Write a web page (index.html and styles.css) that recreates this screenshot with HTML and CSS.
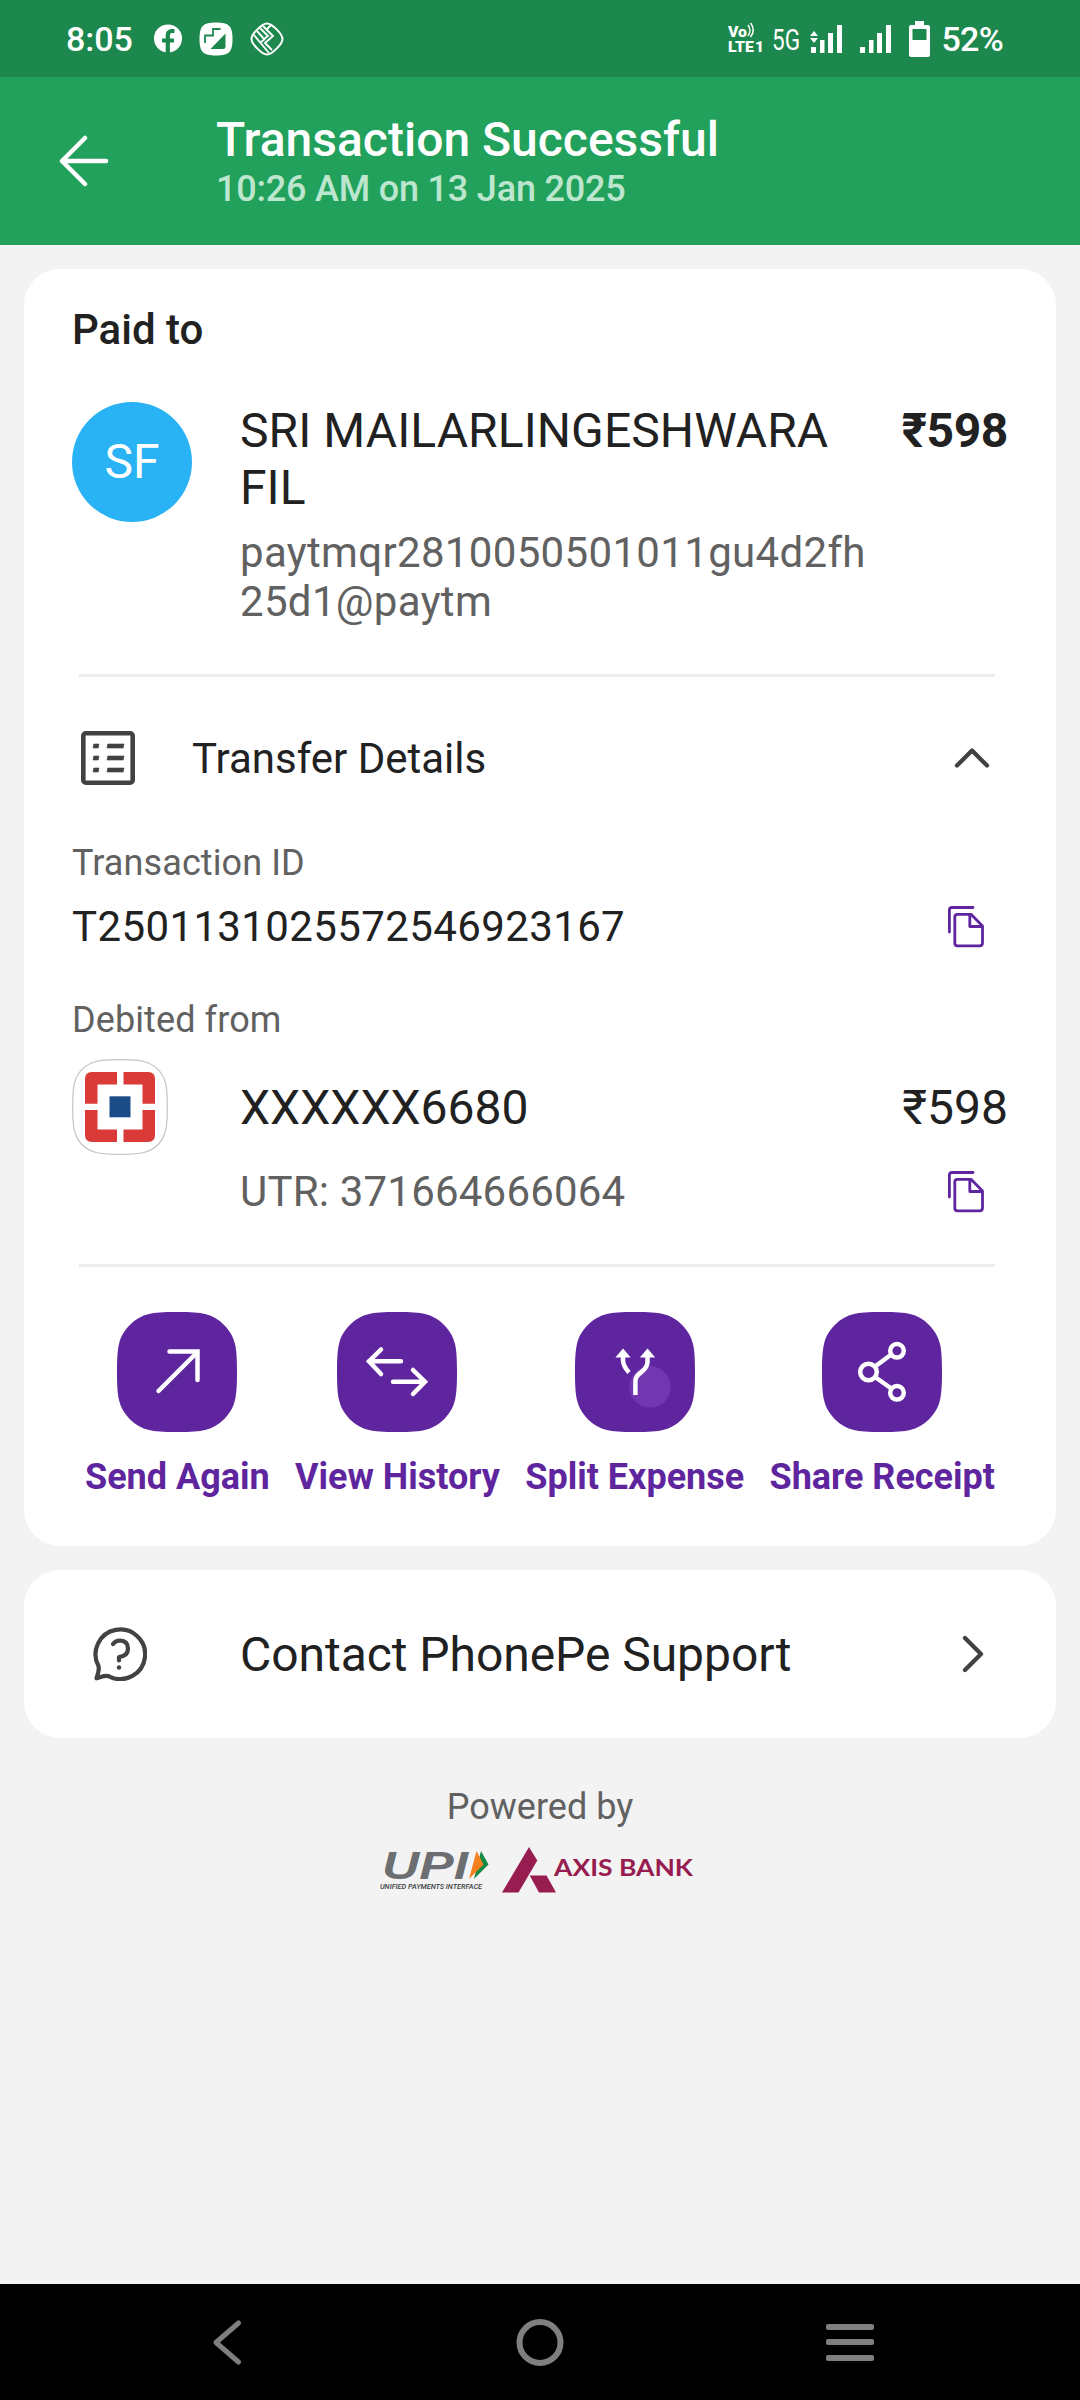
FILE: index.html
```html
<!DOCTYPE html>
<html lang="en">
<head>
    <meta charset="UTF-8">
    <meta name="viewport" content="width=device-width, initial-scale=1.0">
    <title>Transaction Successful</title>
    <link rel="stylesheet" href="styles.css">
</head>
<body>
    <div class="status-bar">
        <div class="status-left">
            <span class="time">8:05</span>
            <svg width="28" height="30" viewBox="0 0 28 30">
                <circle cx="14" cy="14.5" r="14" fill="#fff"/>
                <path d="M13.8 30V11.5Q13.8 7 18 7H20.5M8 16.5H20" fill="none" stroke="#1c884d" stroke-width="4.2"/>
            </svg>
            <svg width="34" height="34" viewBox="0 0 34 34">
                <path d="M17 .5C30 .5 33.5 4 33.5 17S30 33.5 17 33.5.5 30 .5 17 4 .5 17 .5Z" fill="#fff"/>
                <path d="M6 21V13.5H14V7H21.5" fill="none" stroke="#1c884d" stroke-width="1.8"/>
                <path d="M26.5 11.5V24.5Q26.5 27 24 27H11.5Z" fill="#1c884d"/>
            </svg>
            <svg width="34" height="34" viewBox="0 0 34 34" fill="none" stroke="#fff">
                <path d="M17 1.5C22 1.5 32.5 12 32.5 17S22 32.5 17 32.5 1.5 22 1.5 17 12 1.5 17 1.5Z" stroke-width="2"/>
                <path d="M4 13L19 31M7 9L14 17L18 14L10 6M13 4L23 14L15 21L22 28M17 7L21 3M11 20L15 17" stroke-width="1.9"/>
            </svg>
        </div>
        <div class="status-right">
            <svg class="volte" width="36" height="36" viewBox="0 0 36 36" fill="#fff">
                <text x="0" y="16" font-size="15" textLength="19" lengthAdjust="spacingAndGlyphs">Vo</text>
                <path d="M20 4Q24 9.5 20 15M22.5 2Q28 9 22.5 16" fill="none" stroke="#fff" stroke-width="1.5"/>
                <text x="0" y="31" font-size="15.5" textLength="26" lengthAdjust="spacingAndGlyphs">LTE</text>
                <text x="27" y="31" font-size="15.5">1</text>
            </svg>
            <svg class="net" width="28" height="38" viewBox="0 0 28 38" fill="#fff">
                <text x="0" y="29.5" font-size="30" textLength="28" lengthAdjust="spacingAndGlyphs">5G</text>
            </svg>
            <svg class="signal" width="32" height="30" viewBox="0 0 32 30" fill="#fff">
                <path d="M0 11L4 6L8 11ZM0 13L4 18L8 13ZM1 22H6V28H1ZM10 15H14.5V28H10ZM18 8H23V28H18ZM27 0H32V28H27Z"/>
            </svg>
            <svg class="signal" width="31" height="30" viewBox="0 0 31 30" fill="#fff">
                <path d="M0 22H5V28H0ZM9 15H13.5V28H9ZM17 8H22V28H17ZM26 0H31V28H26Z"/>
            </svg>
            <svg class="battery" width="21" height="36" viewBox="0 0 21 36">
                <path d="M6 0H15V4H19Q21 4 21 6V34Q21 36 19 36H2Q0 36 0 34V6Q0 4 2 4H6Z" fill="#fff"/>
                <path d="M3.5 8H17.5V19H3.5Z" fill="#1c884d"/>
            </svg>
            <span class="percent">52%</span>
        </div>
    </div>

    <header class="header">
        <svg class="back" width="50" height="52" viewBox="0 0 50 52">
            <path d="M26 3L3 26L26 49M3 26H47" fill="none" stroke="#fff" stroke-width="4.5" stroke-linecap="round" stroke-linejoin="round"/>
        </svg>
        <div>
            <h1>Transaction Successful</h1>
            <p>10:26 AM on 13 Jan 2025</p>
        </div>
    </header>

    <main class="content">
        <section class="card">
            <h2>Paid to</h2>
            <div class="payee">
                <div class="avatar">SF</div>
                <div class="payee-info">
                    <div class="name">SRI MAILARLINGESHWARA FIL</div>
                    <div class="vpa">paytmqr2810050501011gu4d2fh25d1@paytm</div>
                </div>
                <div class="amount bold">₹598</div>
            </div>

            <hr>

            <div class="row details-head">
                <svg width="54" height="54" viewBox="0 0 54 54" fill="none" stroke="#424242">
                    <rect x="2.3" y="2.3" width="49.4" height="49.4" rx="2.5" stroke-width="4.6"/>
                    <path d="M12 17L12.8 13H18L17.2 17ZM26 17L26.8 13H43L42.2 17ZM12 29L12.8 25H18L17.2 29ZM26 29L26.8 25H43L42.2 29ZM12 41L12.8 37H18L17.2 41ZM26 41L26.8 37H43L42.2 41Z" fill="#424242" stroke-width=".6" stroke-linejoin="round"/>
                </svg>
                <span class="details-title">Transfer Details</span>
                <svg class="chevron-up" width="36" height="22" viewBox="0 0 36 22">
                    <path d="M3 18.5L18 3.5L33 18.5" fill="none" stroke="#424242" stroke-width="4.3" stroke-linecap="round" stroke-linejoin="round"/>
                </svg>
            </div>

            <div class="label">Transaction ID</div>
            <div class="row txn">
                <span>T2501131025572546923167</span>
                <svg class="copy" width="36" height="42" viewBox="0 0 36 42">
                    <path d="M1.4 26V4Q1.4 1.5 4 1.5H25M9.5 8.3H23L34.5 20V37Q34.5 39.8 31.5 39.8H9.5Q6.8 39.8 6.8 37V11Q6.8 8.3 9.5 8.3ZM21.8 8.5V20.5H34"/>
                </svg>
            </div>

            <div class="label debited">Debited from</div>
            <div class="row bank">
                <svg width="96" height="96" viewBox="0 0 96 96">
                    <path d="M48 .7C60 .7 67 1.2 72 2.5C83 5.5 90.5 13 93.5 24C94.8 29 95.3 36 95.3 48S94.8 67 93.5 72C90.5 83 83 90.5 72 93.5C67 94.8 60 95.3 48 95.3S29 94.8 24 93.5C13 90.5 5.5 83 2.5 72C1.2 67 .7 60 .7 48S1.2 29 2.5 24C5.5 13 13 5.5 24 2.5C29 1.2 36 .7 48 .7Z" fill="#fff" stroke="#c4c4c4" stroke-width="1.2"/>
                    <path d="M45 13H20Q13 13 13 20V44.7H25.5V25.5H45ZM51.5 13H76Q83 13 83 20V44.7H70.5V25.5H51.5ZM45 83H20Q13 83 13 76V51H25.5V70.5H45ZM51.5 83H76Q83 83 83 76V51H70.5V70.5H51.5Z" fill="#da3a38"/>
                    <rect x="37.5" y="37.3" width="21" height="21" fill="#1c4c87"/>
                </svg>
                <span class="account">XXXXXX6680</span>
                <span class="amount">₹598</span>
            </div>
            <div class="row utr">
                <span>UTR: 371664666064</span>
                <svg class="copy" width="36" height="42" viewBox="0 0 36 42">
                    <path d="M1.4 26V4Q1.4 1.5 4 1.5H25M9.5 8.3H23L34.5 20V37Q34.5 39.8 31.5 39.8H9.5Q6.8 39.8 6.8 37V11Q6.8 8.3 9.5 8.3ZM21.8 8.5V20.5H34"/>
                </svg>
            </div>

            <hr>

            <!-- shared tile shape for the action buttons -->
            <svg class="defs" width="0" height="0">
                <symbol id="tile" viewBox="0 0 120 120">
                    <path d="M60 0C74 0 82 .6 88 2C102 5 115 18 118 32C119.4 38 120 46 120 60S119.4 82 118 88C115 102 102 115 88 118C82 119.4 74 120 60 120S38 119.4 32 118C18 115 5 102 2 88C.6 82 0 74 0 60S.6 38 2 32C5 18 18 5 32 2C38 .6 46 0 60 0Z" fill="#5f259f"/>
                </symbol>
            </svg>

            <div class="actions">
                <div class="action">
                    <svg class="icon" viewBox="0 0 120 120">
                        <use href="#tile"/>
                        <path d="M41.5 79L80 40.5" stroke-linecap="round"/>
                        <path d="M52.5 39.5H80.5V68" stroke-linecap="round"/>
                    </svg>
                    <span>Send Again</span>
                </div>
                <div class="action">
                    <svg class="icon" viewBox="0 0 120 120">
                        <use href="#tile"/>
                        <path d="M44 37.5L32 49.3L44 62M32 49.3H64M76 58L88 69.7L76 82M56 69.7H88" stroke-linecap="round"/>
                    </svg>
                    <span>View History</span>
                </div>
                <div class="action">
                    <svg class="icon" viewBox="0 0 120 120">
                        <use href="#tile"/>
                        <circle cx="75" cy="74.8" r="20.7" fill="#7236b0" stroke="none"/>
                        <path d="M48 44V48Q48 54 54 60.5M72.5 44V50Q72.5 55 66.5 60Q60.4 64 60.4 69V83"/>
                        <path d="M48 38L53.5 44.5H42.5ZM72.5 38L78 44.5H67Z" fill="#fff" stroke-width="2"/>
                    </svg>
                    <span>Split Expense</span>
                </div>
                <div class="action">
                    <svg class="icon" viewBox="0 0 120 120">
                        <use href="#tile"/>
                        <circle cx="46.5" cy="60" r="8.3"/>
                        <circle cx="75" cy="38.8" r="6.8"/>
                        <circle cx="75" cy="80.8" r="6.8"/>
                        <path d="M53 54.5L70 42M53 65L70 77"/>
                    </svg>
                    <span>Share Receipt</span>
                </div>
            </div>
        </section>

        <section class="card row support">
            <svg width="54" height="54" viewBox="0 0 54 54" fill="none" stroke="#424242" stroke-linecap="round" stroke-linejoin="round">
                <path d="M3.5 51.3C5.5 46 6.5 43 5.500 39A24.800 24.800 0 1 1 17 49.800C12.500 47 9 50 3.500 51.300Z" stroke-width="4.2"/>
                <path d="M20 17Q22.5 13.5 27 13.5Q35 14 35 21.500Q35 29 26 30V33.500" stroke-width="4.2"/>
                <circle cx="26" cy="40.5" r="2.2" fill="#424242" stroke="none"/>
            </svg>
            <span class="support-text">Contact PhonePe Support</span>
            <svg class="chevron-right" width="22" height="38" viewBox="0 0 22 38">
                <path d="M3 3L19 19L3 35" fill="none" stroke="#424242" stroke-width="4.3" stroke-linecap="round" stroke-linejoin="round"/>
            </svg>
        </section>

        <footer class="powered">
            <p>Powered by</p>
            <div class="logos">
                <svg width="110" height="50" viewBox="0 -4 110 50">
                    <text class="upi" x="2" y="32" font-size="39" textLength="86" lengthAdjust="spacingAndGlyphs">UPI</text>
                    <path d="M101 4L108.5 17.5L94 32Z" fill="#128a43"/>
                    <path d="M96.500 4L103.500 17.500L89 32Z" fill="#f58020"/>
                    <text class="upi-sub" x="0" y="42" font-size="7.5" textLength="102" lengthAdjust="spacingAndGlyphs">UNIFIED PAYMENTS INTERFACE</text>
                </svg>
                <svg width="194" height="50" viewBox="0 -4 194 50">
                    <path d="M27 0L35.3 13.5L16.5 45.5H0ZM27.7 28.5H44.500L54 45.500H37Z" fill="#971c4f"/>
                    <text class="axis" x="52" y="29" font-size="23.5" textLength="139" lengthAdjust="spacingAndGlyphs">AXIS BANK</text>
                </svg>
            </div>
        </footer>
    </main>

    <nav class="nav-bar">
        <svg width="50" height="50" viewBox="0 0 50 50">
            <path d="M34.5 6L12 25.5L34.5 45" fill="none" stroke="#7f7f7f" stroke-width="5" stroke-linecap="round" stroke-linejoin="round"/>
        </svg>
        <svg width="50" height="50" viewBox="0 0 50 50">
            <circle cx="25" cy="25.5" r="20.5" fill="none" stroke="#7f7f7f" stroke-width="6"/>
        </svg>
        <svg width="50" height="50" viewBox="0 0 50 50" fill="#7f7f7f">
            <rect x="0" y="7" width="48" height="6" rx="2"/>
            <rect x="0" y="22" width="48" height="6" rx="2"/>
            <rect x="0" y="38" width="48" height="6" rx="2"/>
        </svg>
    </nav>
</body>
</html>
```
FILE: styles.css
```css
* {
    margin: 0;
    padding: 0;
    box-sizing: border-box;
}
body {
    width: 100%;
    height: 100vh;
    display: flex;
    flex-direction: column;
    background: #f3f3f3;
    color: #212121;
    font-family: Roboto, sans-serif;
    font-size: 42px;
    line-height: 49px;
    overflow: hidden;
}
svg {
    display: block;
    flex-shrink: 0;
}
.status-bar {
    height: 77px;
    background: #1c884d;
    color: #ffffff;
    display: flex;
    justify-content: space-between;
    align-items: center;
    padding: 1px 77px 0 66px;
    font-size: 34px;
    font-weight: 500;
}
.status-left {
    display: flex;
    align-items: center;
    gap: 17px;
}
.time {
    width: 71px;
}
.status-right {
    display: flex;
    align-items: center;
}
.volte {
    font-weight: 900;
    margin-right: 8px;
}
.net {
    font-weight: 400;
    margin-right: 10px;
}
.signal {
    margin: 2px 18px 0 0;
}
.battery {
    margin-right: 11px;
}
.percent {
    letter-spacing: -0.7px;
}
.header {
    height: 168px;
    background: #22a15c;
    color: #ffffff;
    display: flex;
    align-items: center;
    padding: 0 59px;
}
.header h1 {
    font-size: 48px;
    font-weight: 500;
    line-height: 57px;
}
.header p {
    font-size: 36px;
    font-weight: 500;
    line-height: 42px;
    letter-spacing: -0.2px;
    margin-bottom: 2px;
    color: #bde6ce;
}
.back {
    margin-right: 107px;
}
.content {
    flex: 1;
    padding: 24px;
}
.card {
    background: #ffffff;
    border-radius: 36px;
    padding: 36px 48px 48px;
    margin-bottom: 24px;
}
.card h2 {
    font-size: 42px;
    font-weight: 500;
}
.row {
    display: flex;
    align-items: center;
}
.payee {
    display: flex;
    align-items: flex-start;
    margin-top: 48px;
}
.avatar {
    width: 120px;
    height: 120px;
    border-radius: 50%;
    background: #29b3f4;
    color: #ffffff;
    font-size: 48px;
    line-height: 120px;
    text-align: center;
    margin-right: 48px;
}
.payee-info {
    width: 639px;
}
.name,
.account,
.amount,
.support-text {
    font-size: 48px;
    line-height: 57px;
}
.name {
    letter-spacing: 0.08px;
}
.vpa {
    margin-top: 12px;
    color: #616161;
    letter-spacing: 0.33px;
    word-break: break-all;
}
.amount {
    margin-left: auto;
    font-weight: 400;
}
.bold {
    font-weight: 700;
    letter-spacing: -0.4px;
}
hr {
    height: 3px;
    border: none;
    background: #eceeee;
    margin: 48px 13px 0 7px;
}
.details-head {
    padding: 54px 18px 57px 9px;
}
.details-title {
    margin-left: 57px;
}
.chevron-up {
    margin-left: auto;
}
.label {
    font-size: 36px;
    line-height: 42px;
    letter-spacing: 0.1px;
    color: #616161;
    margin-bottom: 18px;
}
.txn {
    letter-spacing: 0.38px;
}
.debited {
    margin-top: 48px;
}
.copy {
    margin: 0 24px 0 auto;
    fill: none;
    stroke: #5f259f;
    stroke-width: 2.8;
    stroke-linecap: round;
    stroke-linejoin: round;
}
.account {
    margin-left: 72px;
}
.utr {
    margin-top: 12px;
    padding-left: 168px;
    color: #616161;
    letter-spacing: 0.2px;
}
.defs {
    position: absolute;
}
.actions {
    display: flex;
    justify-content: space-between;
    margin-top: 45px;
    padding: 0 13px;
}
.action {
    display: flex;
    flex-direction: column;
    align-items: center;
    gap: 24px;
    font-size: 36px;
    font-weight: 700;
    line-height: 42px;
    color: #5f259f;
}
.icon {
    width: 120px;
    height: 120px;
    fill: none;
    stroke: #ffffff;
    stroke-width: 4.5;
}
.icon use {
    stroke: none;
}
.support {
    height: 168px;
    padding: 0 72px 0 69px;
}
.support-text {
    margin-left: 93px;
    letter-spacing: -0.05px;
}
.chevron-right {
    margin-left: auto;
}
.powered {
    margin-top: 48px;
    text-align: center;
}
.powered p {
    font-size: 36px;
    line-height: 42px;
    color: #616161;
}
.logos {
    display: flex;
    justify-content: center;
    gap: 12px;
    margin: 15px 0 0 -5px;
}
.upi {
    font-family: "Liberation Sans", sans-serif;
    font-weight: 700;
    font-style: italic;
    fill: #6d6e71;
}
.upi-sub {
    font-weight: 500;
    font-style: italic;
    fill: #3d3d3f;
}
.axis {
    font-family: Lato, sans-serif;
    font-weight: 700;
    fill: #971c4f;
}
.nav-bar {
    height: 116px;
    background: #000000;
    display: flex;
    align-items: center;
    justify-content: space-between;
    padding: 0 204px;
}
```
